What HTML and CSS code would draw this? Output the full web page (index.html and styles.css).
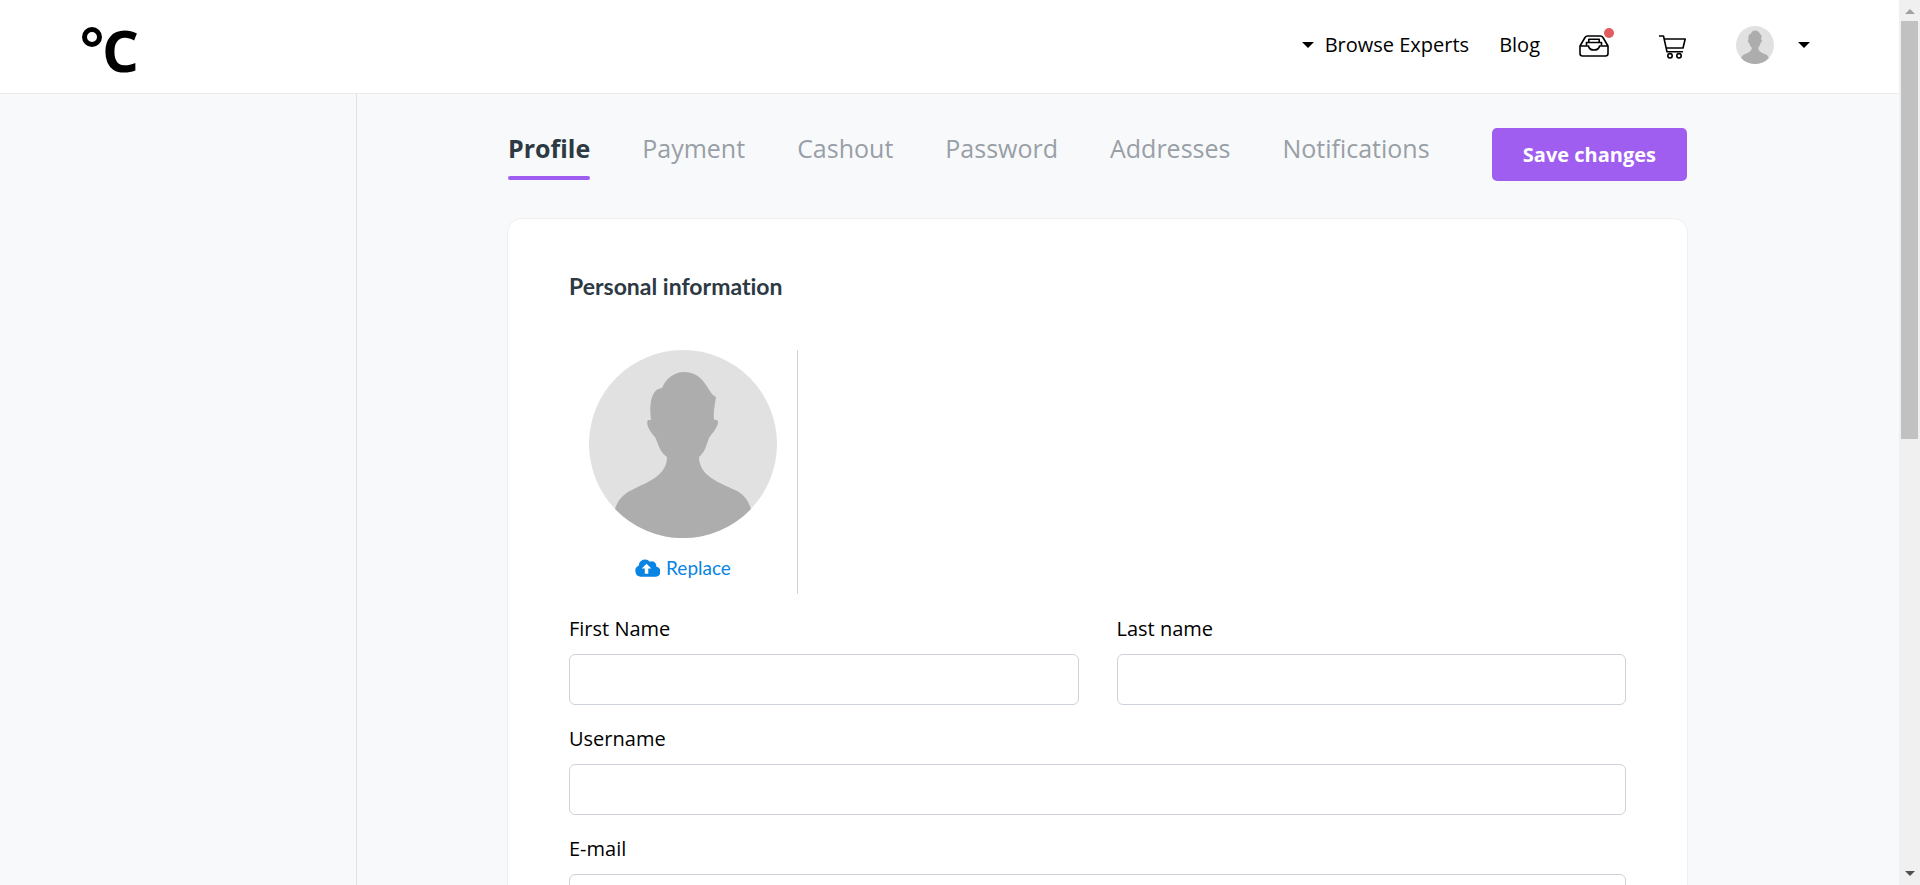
FILE: index.html
```html
<!DOCTYPE html>
<html lang="en">
<head>
<meta charset="utf-8">
<meta name="viewport" content="width=device-width, initial-scale=1">
<title>Profile settings</title>
<link rel="stylesheet" href="styles.css">
</head>
<body>
<svg class="defs" aria-hidden="true">
  <symbol id="person" viewBox="0 0 188 188">
    <circle cx="94" cy="94" r="94" fill="#e1e1e1"/>
    <path fill="#adadad" d="M26 159C29 150 34 144 43 140C58 132 78 126 78 107C70 101 70 95 66 87C62 83 56 74 59 70L62 70C60 54 62 39 73 38C77 28 86 22 95 22C113 22 117 37 124 45L127 47C126 54 124 62 125 70C129 69 130 72 128 76C126 81 122 84 120 88C117 96 116 102 110 107C110 126 131 133 146 140C155 144 159 150 162 159A94 94 0 0 1 26 159Z"/>
  </symbol>
</svg>
<div class="app">
  <header class="header">
    <a class="logo" href="#" aria-label="Home"><span class="ring"></span>C</a>
    <nav class="nav">
      <button class="menu" type="button"><span class="caret"></span>Browse Experts</button>
      <a class="blog" href="#">Blog</a>
      <a class="inbox" href="#" aria-label="Inbox">
        <svg width="30" height="22" viewBox="0 0 30 22" fill="none" stroke="#000" stroke-width="1.600" stroke-linejoin="round">
          <path d="M1 11V18.500Q1 21 3.500 21H26.500Q29 21 29 18.500V11L24 2.500Q23 1 21.500 1H8.500Q7 1 6 2.500L1 11H9.500C10 14 12 15 15 15S20 14 20.500 11H29"/>
          <path d="M7.500 10.500V7.500H22.500V10.500M9.800 7.500V4.300H20.200V7.500"/>
        </svg>
        <span class="dot"></span>
      </a>
      <a class="cart" href="#" aria-label="Cart">
        <svg width="28" height="24" viewBox="0 0 28 24" fill="none" stroke="#000" stroke-width="1.600" stroke-linejoin="round">
          <path d="M0 1H4.500L8 16.800H24M5.200 4H26.200L24 13H7.200"/>
          <circle cx="11" cy="20.800" r="2.200"/><circle cx="20" cy="20.800" r="2.200"/>
        </svg>
      </a>
      <button class="account" type="button" aria-label="Account">
        <svg width="38" height="38"><use href="#person"/></svg><span class="caret"></span>
      </button>
    </nav>
  </header>
  <div class="body">
    <aside class="sidebar"></aside>
    <main class="main">
      <div class="toolbar">
        <nav class="tabs">
          <a class="tab active" href="#">Profile</a>
          <a class="tab" href="#">Payment</a>
          <a class="tab" href="#">Cashout</a>
          <a class="tab" href="#">Password</a>
          <a class="tab" href="#">Addresses</a>
          <a class="tab" href="#">Notifications</a>
        </nav>
        <button class="save" type="submit" form="profile">Save changes</button>
      </div>
      <form class="card" id="profile">
        <h2 class="title">Personal information</h2>
        <div class="photo">
          <svg width="188" height="188" role="img" aria-label="Profile photo"><use href="#person"/></svg>
          <button class="replace" type="button">
            <svg width="25" height="18" viewBox="0 0 26 18"><path fill="#0984e3" d="M6 18A6 6 0 0 1 4 6.500A6.500 6.500 0 0 1 15.500 2.500A4.500 4.500 0 0 1 22 7.500A5.300 5.300 0 0 1 20.500 18Z"/><path fill="#fff" d="M12 4.500L17 9.500H13.800V15H10.200V9.500H7Z"/></svg>
            Replace
          </button>
        </div>
        <div class="fields">
          <div class="field"><label for="first">First Name</label><input id="first" type="text"></div>
          <div class="field"><label for="last">Last name</label><input id="last" type="text"></div>
          <div class="field wide"><label for="user">Username</label><input id="user" type="text"></div>
          <div class="field wide"><label for="email">E-mail</label><input id="email" type="email"></div>
        </div>
      </form>
    </main>
  </div>
</div>
<div class="scrollbar" aria-hidden="true">
  <span class="arrow up"></span>
  <span class="track"><span class="thumb"></span></span>
  <span class="arrow down"></span>
</div>
</body>
</html>
```
FILE: styles.css
```css
* { box-sizing: border-box; }
body {
  margin: 0;
  height: 100vh;
  display: flex;
  overflow: hidden;
  background: #f8f9fb;
  color: #000;
  font: 20px/28px "Open Sans", sans-serif;
}
a { color: inherit; text-decoration: none; }
button { border: 0; padding: 0; background: none; color: inherit; font: inherit; cursor: pointer; }
svg { display: block; }
.defs { position: absolute; width: 0; height: 0; }

.app { flex: 1; min-width: 0; display: flex; flex-direction: column; }
.header {
  flex: none;
  height: 94px;
  padding: 0 89px 0 82px;
  display: flex;
  justify-content: space-between;
  border-bottom: 1px solid #ebebeb;
  background: #fff;
}
.logo { display: flex; font-size: 58px; line-height: 99px; font-weight: 700; }
.ring { width: 20px; height: 20px; margin-top: 27px; border: 5px solid #000; border-radius: 50%; }
.nav { display: flex; align-items: center; height: 90px; }
.menu { display: flex; align-items: center; gap: 11px; }
.caret {
  border: 6px solid transparent;
  border-top-color: #000;
  border-bottom: 0;
}
.blog { margin-left: 30px; }
.inbox { margin-left: 39px; padding-top: 2px; position: relative; }
.dot {
  position: absolute;
  top: -5px;
  right: -5px;
  width: 10px;
  height: 10px;
  border-radius: 50%;
  background: #e25b5e;
}
.cart { margin-left: 50px; padding-top: 3px; }
.account { margin-left: 49px; display: flex; align-items: center; gap: 24px; }

.body { flex: 1; min-height: 0; display: flex; }
.sidebar { flex: none; width: 357px; border-right: 1px solid #dde2ec; }
.main { flex: 1; min-width: 0; padding: 34px 212px 0 151px; overflow: hidden; }
.toolbar { display: flex; justify-content: space-between; align-items: flex-start; margin-bottom: 38px; }
.tabs { display: flex; gap: 52px; font-size: 25px; line-height: 40px; color: #999fa6; }
.tab { padding-bottom: 8px; border-bottom: 4px solid transparent; }
.tab.active { position: relative; color: #2d3943; font-weight: 700; }
.tab.active::after {
  content: "";
  position: absolute;
  left: 0;
  right: 0;
  bottom: -4px;
  height: 4px;
  border-radius: 2px;
  background: #a05ef0;
}
.save {
  height: 53px;
  padding: 0 31px;
  border-radius: 5px;
  background: #a05ef0;
  color: #fff;
  font-weight: 700;
}
.card {
  padding: 49px 61px;
  border-radius: 14px;
  box-shadow: 0 0 0 1px #eeeff1;
  background: #fff;
}
.title { margin: 0 0 46px; font: 700 23px/36px Lato, sans-serif; font-variant-ligatures: none; color: #2d3943; }
.photo {
  width: 229px;
  height: 244px;
  border-right: 1px solid #cbd2dc;
  display: flex;
  flex-direction: column;
  align-items: center;
  gap: 16px;
}
.replace { display: flex; align-items: center; gap: 6px; color: #0984e3; font: 19px/28px Lato, sans-serif; }
.fields { margin-top: 21px; display: grid; grid-template-columns: 1fr 1fr; gap: 20px 38px; }
.field { display: flex; flex-direction: column; gap: 11px; }
.wide { grid-column: 1 / -1; }
.field input {
  width: 100%;
  height: 51px;
  padding: 0 14px;
  border: 1px solid #ced2db;
  border-radius: 6px;
  background: #fff;
  font: inherit;
}

.scrollbar { flex: none; width: 21px; padding: 9px 2px; display: flex; flex-direction: column; background: #f0f0f0; }
.arrow { align-self: center; border: 5px solid transparent; }
.up { border-top: 0; border-bottom-color: #a0a0a0; }
.down { border-bottom: 0; border-top-color: #505050; }
.track { flex: 1; margin: 7px 0; }
.thumb { display: block; height: 49.6%; background: #c1c1c1; }
```
